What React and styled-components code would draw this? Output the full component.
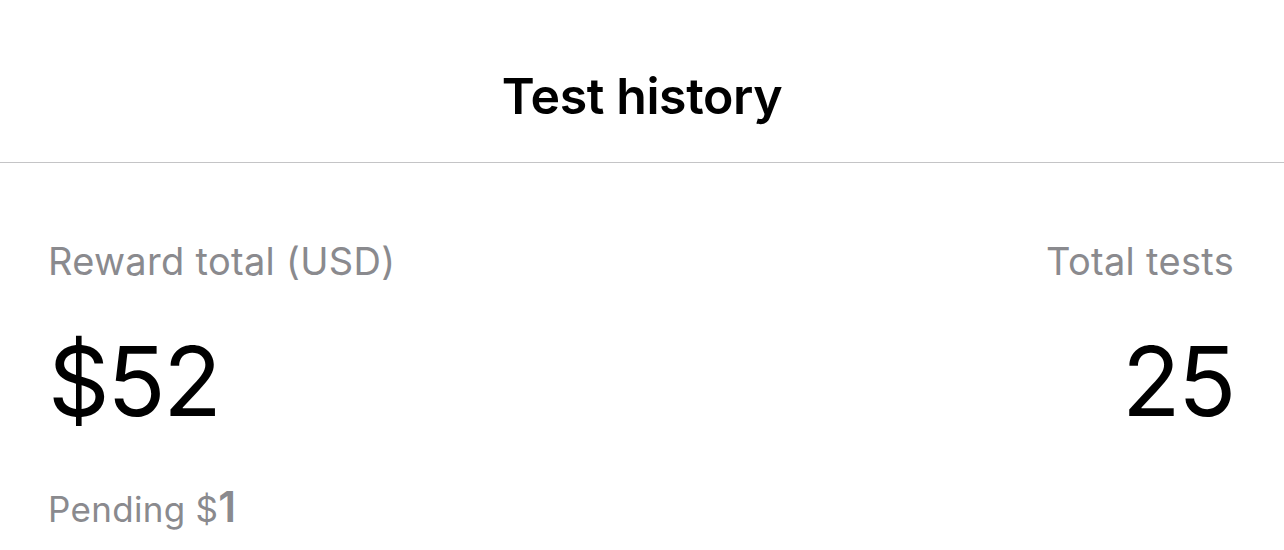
import React from 'react'
import styled, { createGlobalStyle } from 'styled-components'

const GlobalStyle = createGlobalStyle`
    body {
        margin: 0;
        background: #ffffff;
        font-family: Inter, "Noto Sans", sans-serif;
        -webkit-font-smoothing: antialiased;
    }
`

const Page = styled.div`
    width: 1284px;
    height: 550px;
    overflow: hidden;
    background: #fff;
`

const Header = styled.header`
    height: 163px;
    box-sizing: border-box;
    padding-top: 66px;
    display: flex;
    justify-content: center;
    border-bottom: 1px solid #c4c4c6;
`

const Title = styled.h1`
    margin: 0;
    font-size: 50px;
    line-height: 60px;
    font-weight: 600;
    letter-spacing: -0.4px;
    color: #000;
`

const Stats = styled.section`
    display: flex;
    justify-content: space-between;
    padding: 75px 50px 0 48px;
`

const Stat = styled.div`
    display: flex;
    flex-direction: column;
    align-items: ${p => (p.$right ? 'flex-end' : 'flex-start')};
`

const Label = styled.div`
    font-size: 38px;
    line-height: 46px;
    color: #8a8a8e;
    letter-spacing: 0.3px;
`

const Value = styled.div`
    margin-top: 42px;
    font-size: 96px;
    line-height: 110px;
    font-weight: 400;
    letter-spacing: -2.4px;
    color: #000;
`

const Pending = styled.div`
    margin-top: 50px;
    font-size: 35px;
    line-height: 42px;
    letter-spacing: 0.3px;
    color: #8a8a8e;
    b {
        font-size: 42px;
        line-height: 42px;
        font-weight: 600;
    }
`

const App = () => {
    return (
        <Page>
            <GlobalStyle />
            <Header>
                <Title>Test history</Title>
            </Header>
            <Stats>
                <Stat>
                    <Label>Reward total (USD)</Label>
                    <Value>$52</Value>
                    <Pending>Pending $<b>1</b></Pending>
                </Stat>
                <Stat $right>
                    <Label>Total tests</Label>
                    <Value>25</Value>
                </Stat>
            </Stats>
        </Page>
    )
}

export default App
